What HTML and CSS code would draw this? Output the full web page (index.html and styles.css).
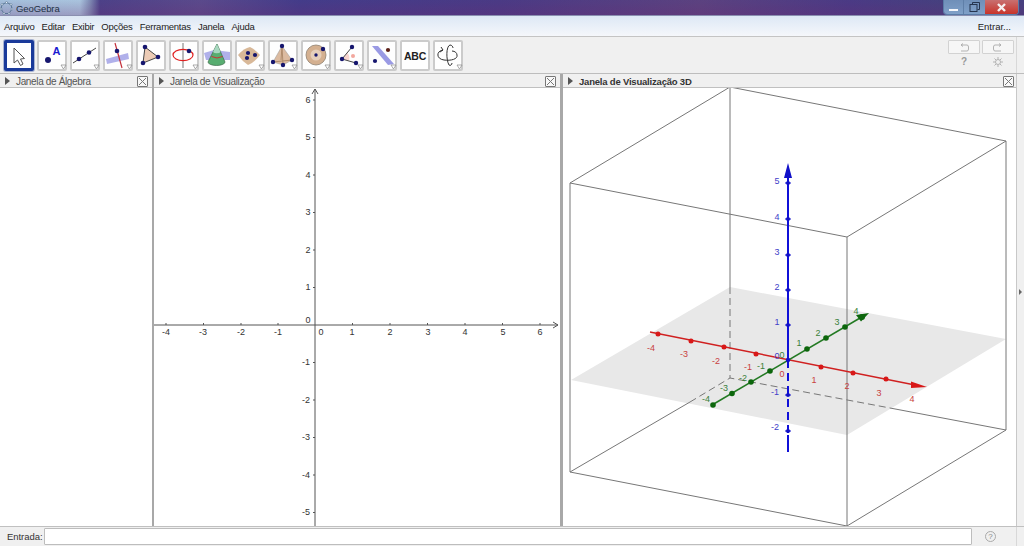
FILE: index.html
```html
<!DOCTYPE html>
<html lang="pt">
<head>
<meta charset="utf-8">
<title>GeoGebra</title>
<link rel="stylesheet" href="styles.css">
</head>
<body>
<div class="app">
  <header class="titlebar">
    <svg class="applogo" width="13" height="14" viewBox="0 0 13 14"><path class="logo" d="M6.500 1.500 L11 3.500 L12 8 L9 12.500 L4 12.500 L1 8 L2 3.500 Z"/><circle class="logodot" cx="6.500" cy="1.500" r="1"/><circle class="logodot" cx="11" cy="3.500" r="1"/><circle class="logodot" cx="12" cy="8" r="1"/><circle class="logodot" cx="9" cy="12.500" r="1"/><circle class="logodot" cx="4" cy="12.500" r="1"/><circle class="logodot" cx="1" cy="8" r="1"/><circle class="logodot" cx="2" cy="3.500" r="1"/></svg>
    <span class="apptitle">GeoGebra</span>
    <div class="winctl">
      <div class="wbtn wmin"><span class="minbar"></span></div>
      <div class="wbtn wmax"><svg width="11" height="10" viewBox="0 0 11 10"><path class="maxicon" d="M3.500 2.500 V0.500 H10.500 V7.500 H8.500"/><rect class="maxicon" x="1" y="2.500" width="7" height="7"/></svg></div>
      <div class="wbtn wclose"><svg width="11" height="9" viewBox="0 0 11 9"><path class="closeicon" d="M2 1 L9 8 M9 1 L2 8"/></svg></div>
    </div>
  </header>
  <nav class="menubar">
    <span>Arquivo</span><span>Editar</span><span>Exibir</span><span>Opções</span><span>Ferramentas</span><span>Janela</span><span>Ajuda</span>
    <span class="login">Entrar...</span>
  </nav>
  <div class="toolbar">
    <div class="tools">
      <div class="tool selected"><svg width="26" height="26" viewBox="0 0 26 26"><path class="cursor" d="M8 5 V20 L11.500 17 L14.500 22.500 L17 21 L14.500 16 L18.500 15.500 Z"/></svg></div>
      <div class="tool"><svg width="30" height="31" viewBox="0 0 30 31"><circle class="pt" cx="11" cy="20" r="3"/><text class="icontext" x="15.500" y="15">A</text><path class="corner" d="M24 25h5l-2.500 4z"/></svg></div>
      <div class="tool"><svg width="30" height="31" viewBox="0 0 30 31"><path class="ln" d="M3 23 L26 8"/><circle class="pts" cx="9" cy="19" r="2.300"/><circle class="pts" cx="19" cy="12.500" r="2.300"/><path class="corner" d="M24 25h5l-2.500 4z"/></svg></div>
      <div class="tool"><svg width="30" height="31" viewBox="0 0 30 31"><path class="plane" d="M3 19 L25 13 L26 19 L4 24 Z"/><path class="redln" d="M12 3 L19 28"/><circle class="pts" cx="14" cy="11" r="2.300"/><path class="corner" d="M24 25h5l-2.500 4z"/></svg></div>
      <div class="tool"><svg width="30" height="31" viewBox="0 0 30 31"><path class="tri" d="M9 7 L22 17 L7 23 Z"/><circle class="pts" cx="9" cy="7" r="2.300"/><circle class="pts" cx="22" cy="17" r="2.300"/><circle class="pts" cx="7" cy="23" r="2.300"/></svg></div>
      <div class="tool"><svg width="30" height="31" viewBox="0 0 30 31"><path class="greyln" d="M14 3 V28"/><ellipse class="redring" cx="14" cy="15" rx="10" ry="5.700"/><circle class="pts" cx="20" cy="11" r="2.300"/><path class="corner" d="M24 25h5l-2.500 4z"/></svg></div>
      <div class="tool"><svg width="30" height="31" viewBox="0 0 30 31"><path class="plane" d="M2 13 L12 10 L28 12 L28 20 L4 20 Z"/><path class="cone" d="M15 4 L23 22 A8.500 3.500 0 0 1 6 22 Z"/><path class="conetop" d="M15 4 L18.500 12 A4 2 0 0 1 11 12 Z"/><path class="redthin" d="M9.500 16.500 Q15 19.500 20.500 16.500"/></svg></div>
      <div class="tool"><svg width="30" height="31" viewBox="0 0 30 31"><path class="sand" d="M3 15 Q9 8 15 7 Q21 10 25 15 Q20 22 13 25 Q7 21 3 15 Z"/><circle class="pts" cx="13" cy="13" r="2.100"/><circle class="pts" cx="20" cy="15" r="2.100"/><circle class="pts" cx="12" cy="18" r="2.100"/><path class="corner" d="M24 25h5l-2.500 4z"/></svg></div>
      <div class="tool"><svg width="30" height="31" viewBox="0 0 30 31"><path class="sandfill" d="M14 6 L5 22 L15 25 L24 20 Z"/><path class="brownln" d="M14 6 L15 25 M14 6 L13 20 M5 22 L24 20"/><circle class="pts" cx="14" cy="6" r="2.200"/><circle class="pts" cx="5" cy="22" r="2.200"/><circle class="pts" cx="15" cy="25" r="2.200"/><circle class="pts" cx="24" cy="20" r="2.200"/><path class="corner" d="M24 25h5l-2.500 4z"/></svg></div>
      <div class="tool"><svg width="30" height="31" viewBox="0 0 30 31"><circle class="sphere" cx="15" cy="15" r="10"/><circle class="sphereinner" cx="15" cy="15" r="5.500"/><circle class="pts" cx="15" cy="15" r="1.700"/><circle class="pts" cx="22" cy="9" r="2.200"/><path class="corner" d="M24 25h5l-2.500 4z"/></svg></div>
      <div class="tool"><svg width="30" height="31" viewBox="0 0 30 31"><path class="pinkarc" d="M13.500 13 A8 8 0 0 1 15 20.500 L8 19 Z"/><path class="ln" d="M18 7 L8 19 L22 23"/><circle class="pinkdot" cx="19" cy="16" r="2"/><circle class="pts" cx="18" cy="7" r="2.200"/><circle class="pts" cx="8" cy="19" r="2.200"/><circle class="pts" cx="22" cy="23" r="2.200"/><path class="corner" d="M24 25h5l-2.500 4z"/></svg></div>
      <div class="tool"><svg width="30" height="31" viewBox="0 0 30 31"><path class="bluestripe" d="M5 6 L11 6 L27 24 L21 25 Z"/><circle class="brownpt" cx="21" cy="10" r="2.100"/><circle class="pts" cx="8" cy="21" r="2.100"/><path class="corner" d="M24 25h5l-2.500 4z"/></svg></div>
      <div class="tool"><svg width="30" height="31" viewBox="0 0 30 31"><text class="abc" x="15" y="20">ABC</text></svg></div>
      <div class="tool"><svg width="30" height="31" viewBox="0 0 30 31"><path class="rotate" d="M10 10 C3 11 3 19 11 20 C18 21 25 19 24 15 C24 13 22 11 19 11 M17 5 C13 6 13 20 16 25 C17 26 19 25 19 23 M17 5 C19 5 20 7 20 8 M10 10 L8 7 M10 10 L7 12"/><path class="corner" d="M24 25h5l-2.500 4z"/></svg></div>
    </div>
    <div class="undo-area">
      <div class="undorow">
        <div class="ubtn"><svg width="12" height="9" viewBox="0 0 12 9"><path class="uicon" d="M3 2 H9 Q10.500 2 10.500 4 V6 Q10.500 8 9 8 H3 M3 2 L5 0.500 M3 2 L5 3.500"/></svg></div>
        <div class="ubtn"><svg width="12" height="9" viewBox="0 0 12 9"><path class="uicon" d="M9 2 H3 Q1.500 2 1.500 4 V6 Q1.500 8 3 8 H9 M9 2 L7 0.500 M9 2 L7 3.500"/></svg></div>
      </div>
      <div class="helprow">
        <span class="helpcell"><span class="help">?</span></span>
        <span class="helpcell"><svg width="10" height="10" viewBox="0 0 10 10"><circle class="uicon" cx="5" cy="5" r="2.500"/><path class="uicon" d="M5 0 V2 M5 8 V10 M0 5 H2 M8 5 H10 M1.500 1.500 L3 3 M7 7 L8.500 8.500 M1.500 8.500 L3 7 M7 3 L8.500 1.500"/></svg></span>
      </div>
    </div>
  </div>
  <main class="views">
    <section class="panel algebra">
      <div class="phead"><span class="tri-r"></span><span class="ptitle">Janela de Álgebra</span><span class="closex"><svg width="9" height="9" viewBox="0 0 9 9"><path class="xmark" d="M1 1 L8 8 M8 1 L1 8"/></svg></span></div>
      <div class="pbody"></div>
    </section>
    <section class="panel graphics">
      <div class="phead"><span class="tri-r"></span><span class="ptitle">Janela de Visualização</span><span class="closex"><svg width="9" height="9" viewBox="0 0 9 9"><path class="xmark" d="M1 1 L8 8 M8 1 L1 8"/></svg></span></div>
      <div class="pbody">
        <svg class="canvas" width="406" height="438" viewBox="154 88 406 438">
          <g class="axis2d">
            <path d="M154 325 H558 M553 322 L558 325 L553 328"/>
            <path d="M315 526 V89 M312 94 L315 89 L318 94"/>
            <path d="M166 323v2M203.500 323v2M241 323v2M278 323v2M352.500 323v2M390 323v2M427.500 323v2M465 323v2M502.500 323v2M540 323v2"/>
            <path d="M315 100h-2M315 137.500h-2M315 175h-2M315 212.500h-2M315 250h-2M315 287.500h-2M315 362.500h-2M315 400h-2M315 437.500h-2M315 475h-2M315 512.500h-2"/>
          </g>
          <g class="lbl2d">
            <text x="166" y="335">-4</text><text x="203" y="335">-3</text><text x="241" y="335">-2</text><text x="278" y="335">-1</text><text x="321" y="335">0</text><text x="352" y="335">1</text><text x="390" y="335">2</text><text x="428" y="335">3</text><text x="465" y="335">4</text><text x="503" y="335">5</text><text x="540" y="335">6</text>
            <text x="308" y="323">0</text>
            <text x="308" y="103">6</text><text x="308" y="140">5</text><text x="308" y="178">4</text><text x="308" y="215">3</text><text x="308" y="253">2</text><text x="308" y="290">1</text>
            <text x="306" y="365">-1</text><text x="306" y="403">-2</text><text x="306" y="440">-3</text><text x="306" y="478">-4</text><text x="306" y="515">-5</text>
          </g>
        </svg>
      </div>
    </section>
    <section class="panel view3d">
      <div class="phead"><span class="tri-r"></span><span class="ptitle active">Janela de Visualização 3D</span><span class="closex"><svg width="9" height="9" viewBox="0 0 9 9"><path class="xmark" d="M1 1 L8 8 M8 1 L1 8"/></svg></span></div>
      <div class="pbody">
        <svg class="canvas" width="453" height="438" viewBox="563 88 453 438">
          <path class="floor" d="M730 287 L1006 339 L847 435 L571 380 Z"/>
          <g class="box">
            <path d="M570 183 L730 87 L1006 141 L847 237 Z"/>
            <path d="M570 183 V472 M847 237 V526 M1006 141 V430 M730 87 V287"/>
            <path d="M570 472 L847 526 L1006 430"/>
            <path d="M570 472 L690 402 M890 408 L1006 430"/>
          </g>
          <g class="box dashed">
            <path d="M730 287 V378 M690 402 L730 378 L890 408"/>
          </g>
          <g class="xaxis">
            <path class="axisln" d="M650 332 L915 385"/>
            <path class="axishead" d="M927 387 L911 381.500 L911 388 Z"/>
            <circle cx="658" cy="334" r="2.500"/><circle cx="691" cy="341" r="2.500"/><circle cx="724" cy="347" r="2.500"/><circle cx="756" cy="354" r="2.500"/><circle cx="821" cy="367" r="2.500"/><circle cx="853" cy="373" r="2.500"/><circle cx="886" cy="379" r="2.500"/>
          </g>
          <g class="yaxis">
            <path class="axisln" d="M712 405 L860 318"/>
            <path class="axishead" d="M869 313 L856 315 L861 321.500 Z"/>
            <circle cx="713" cy="405" r="2.800"/><circle cx="732" cy="393.500" r="2.800"/><circle cx="751" cy="382" r="2.800"/><circle cx="770" cy="371" r="2.800"/><circle cx="807" cy="349" r="2.800"/><circle cx="826" cy="338" r="2.800"/><circle cx="845" cy="327" r="2.800"/><circle cx="862" cy="317" r="3"/>
          </g>
          <g class="zaxis">
            <path class="axisln" d="M788 172 V360 M788 435 V452"/>
            <path class="axisln dashz" d="M788 360 V435"/>
            <path class="axishead" d="M788 163 L784 178 L792 178 Z"/>
            <path class="zticks" d="M785 183h6M785 219h6M785 255h6M785 290h6M785 325h6M785 395h6M785 431h6"/>
            <circle cx="788" cy="183" r="2"/><circle cx="788" cy="219" r="2"/><circle cx="788" cy="255" r="2"/><circle cx="788" cy="290" r="2"/><circle cx="788" cy="325" r="2"/><circle cx="788" cy="395" r="2"/><circle cx="788" cy="431" r="2"/>
            <circle cx="788" cy="360" r="2.200"/>
          </g>
          <g class="lblx">
            <text x="651" y="351">-4</text><text x="684" y="357">-3</text><text x="716" y="364">-2</text><text x="748" y="370">-1</text><text x="782" y="377">0</text><text x="814" y="383">1</text><text x="847" y="389">2</text><text x="879" y="396">3</text><text x="912" y="402">4</text>
          </g>
          <g class="lbly">
            <text x="706" y="402">-4</text><text x="724" y="391">-3</text><text x="743" y="381">-2</text><text x="761" y="369">-1</text><text x="782" y="358">0</text><text x="799" y="346">1</text><text x="818" y="336">2</text><text x="837" y="325">3</text><text x="856" y="314">4</text>
          </g>
          <g class="lblz">
            <text x="777" y="184">5</text><text x="777" y="220">4</text><text x="777" y="255">3</text><text x="777" y="290">2</text><text x="777" y="325">1</text><text x="777" y="359">0</text><text x="775" y="395">-1</text><text x="775" y="430">-2</text>
          </g>
        </svg>
      </div>
    </section>
    <aside class="sidebar"><span class="side-arrow"></span></aside>
  </main>
  <footer class="inputbar">
    <label class="entrylabel">Entrada:</label>
    <div class="entryfield"></div>
    <span class="entryhelp">?</span>
  </footer>
</div>
</body>
</html>
```
FILE: styles.css
```css
* { box-sizing: border-box; }
html, body { margin: 0; padding: 0; }
body { width: 1024px; height: 546px; overflow: hidden; background: #f0f0f0; font-family: "Liberation Sans", Arial, sans-serif; font-size: 10px; color: #333; }
.app { display: flex; flex-direction: column; width: 1024px; height: 546px; }

.titlebar { flex: 0 0 16px; display: flex; align-items: flex-start; padding-left: 0; background: linear-gradient(180deg, rgba(90, 80, 150, 0) 0, rgba(110, 40, 110, 0.25) 100%), linear-gradient(90deg, #a4c1dc 0, #a9c4de 80px, #7f8bb4 90px, #4c4188 100px, #5a4a8c 200px, #433c8a 300px, #4a3a85 500px, #5b4280 700px, #4a3a85 850px, #45407f 940px, #45407f 1024px); border-bottom: 1px solid #8a8fb0; }
.applogo { flex: none; margin: 1px 0 0 0; }
.logo { fill: none; stroke: #4a6a88; stroke-width: 0.800; }
.logodot { fill: #e8f0f8; stroke: #4a6a88; stroke-width: 0.500; }
.apptitle { margin: 3px 0 0 3px; font-size: 9.500px; line-height: 11px; color: #1e3044; letter-spacing: -0.100px; }
.winctl { margin-left: auto; margin-right: 5px; display: flex; height: 15px; border: 1px solid #5a7ba6; border-top: 0; border-radius: 0 0 4px 4px; overflow: hidden; }
.wbtn { display: flex; align-items: center; justify-content: center; }
.wmin { width: 20px; background: linear-gradient(#6f8fb8, #7fa0c8); border-right: 1px solid #5f7fa8; }
.wmax { width: 21px; background: linear-gradient(#6f8fb8, #7fa0c8); }
.wclose { width: 33px; background: linear-gradient(#c87070, #c8342a); }
.minbar { width: 9px; height: 2px; margin-top: 5px; background: #f4f6fa; }
.maxicon { fill: none; stroke: #25354f; stroke-width: 1; }
.closeicon { fill: none; stroke: #f6f0f0; stroke-width: 2.400; }

.menubar { flex: 0 0 21px; display: flex; align-items: center; gap: 7.100px; padding: 1px 4px 0; background: linear-gradient(#dde8f5, #f5f7fb); border-bottom: 1px solid #c4c4c4; font-size: 9.500px; letter-spacing: -0.250px; color: #222; }
.login { margin-left: auto; margin-right: 9px; letter-spacing: 0; }

.toolbar { flex: 0 0 37px; display: flex; justify-content: space-between; padding: 3px 0 0 4px; background: linear-gradient(90deg, #f0f0f0 1016px, #d8d8d8 1016px, #d8d8d8 1017px, #f0f0f0 1017px); border-bottom: 1px solid #bdbdbd; }
.tools { display: flex; gap: 3px; align-items: flex-start; }
.tool { width: 30px; height: 31px; background: #fefefe; border: 2px solid #cbcbcb; border-radius: 2px; display: flex; align-items: center; justify-content: center; flex: none; }
.tool svg { flex: none; margin: -2px; }
.tool.selected { background: #fff; border: 3px solid #1a3a9a; box-shadow: 0 0 0 1px #a9b4d2; }
.cursor { fill: #fff; stroke: #555; stroke-width: 1; }
.pt, .pts { fill: #16166e; }
.icontext { font: bold 11px "Liberation Sans", sans-serif; fill: #1a1ad0; }
.corner { fill: #fff; stroke: #888; stroke-width: 0.700; }
.ln { stroke: #444; stroke-width: 1; fill: none; }
.plane { fill: #b0b0ea; }
.redln { stroke: #c4303a; stroke-width: 1.200; fill: none; }
.tri { fill: #eccbb5; stroke: #444; stroke-width: 1; }
.redring { fill: none; stroke: #e02020; stroke-width: 1.200; }
.greyln { stroke: #777; stroke-width: 1; }
.cone { fill: #58ad70; stroke: #3a6a48; stroke-width: 0.700; }
.conetop { fill: #a8d8c0; }
.redthin { stroke: #d03030; fill: none; }
.sand { fill: #d8b898; }
.sandfill { fill: #dcbba0; stroke: #999; stroke-width: 0.500; }
.brownln { stroke: #a58060; stroke-width: 0.800; fill: none; }
.sphere { fill: #d4b090; stroke: #8f8070; stroke-width: 0.800; }
.sphereinner { fill: #e6cfba; }
.pinkarc { fill: #f8d5cf; }
.pinkdot { fill: #f2a79e; }
.bluestripe { fill: #9a9ae4; }
.brownpt { fill: #5a2018; }
.abc { font: bold 10.500px "Liberation Sans", sans-serif; fill: #222; text-anchor: middle; letter-spacing: -0.200px; }
.rotate { fill: none; stroke: #333; stroke-width: 1; }

.undo-area { width: 76px; padding: 0 10px 0 0; display: flex; flex-direction: column; align-items: stretch; }
.undorow { display: flex; gap: 2px; justify-content: flex-end; }
.ubtn { width: 32px; height: 14px; border: 1px solid #d2d2d2; border-radius: 1px; background: #f6f6f6; display: flex; align-items: center; justify-content: center; }
.uicon { fill: none; stroke: #aaa; stroke-width: 0.900; }
.helprow { display: flex; justify-content: flex-end; gap: 2px; padding-top: 2px; }
.helpcell { width: 32px; height: 11px; display: flex; align-items: center; justify-content: center; }
.help { color: #999; font-size: 10px; font-weight: bold; }

.views { flex: 1 1 auto; display: flex; min-height: 0; background: #fff; }
.panel { display: flex; flex-direction: column; min-width: 0; }
.algebra { flex: 0 0 154px; border-right: 2px solid #a8a8a8; }
.algebra .phead { padding-right: 4px; }
.graphics { flex: 0 0 409px; border-right: 3px solid #a8a8a8; }
.view3d { flex: 1 1 auto; }
.view3d .phead { padding-right: 2px; }
.phead { flex: 0 0 14px; display: flex; align-items: center; padding: 1px 4px 0 5px; background: #f0f0f0; border-bottom: 1px solid #c0c0c0; }
.tri-r { width: 0; height: 0; border-left: 5px solid #555; border-top: 4px solid transparent; border-bottom: 4px solid transparent; margin-right: 6px; }
.ptitle { color: #555; font-size: 10px; letter-spacing: -0.350px; }
.ptitle.active { color: #333; font-weight: bold; font-size: 9.500px; letter-spacing: -0.200px; }
.closex { margin-left: auto; width: 11px; height: 11px; border: 1px solid #777; border-radius: 1px; display: flex; background: #f8f8f8; }
.xmark { stroke: #777; stroke-width: 1; fill: none; }
.pbody { flex: 1 1 auto; background: #fff; min-height: 0; }
.canvas { display: block; }

.axis2d path { fill: none; stroke: #555; stroke-width: 1; }
.lbl2d text { font-size: 9px; fill: #333; text-anchor: middle; }

.floor { fill: #e8e8e8; }
.box path { fill: none; stroke: #777; stroke-width: 1; }
.dashed path { stroke-dasharray: 7 4; }
.axisln { fill: none; stroke-width: 1.500; }
.xaxis .axisln { stroke: #d02020; }
.xaxis .axishead, .xaxis circle { fill: #d81818; }
.yaxis .axisln { stroke: #237a23; }
.yaxis .axishead, .yaxis circle { fill: #0c660c; }
.zaxis .axisln { stroke: #1010d8; stroke-width: 2; }
.zaxis .dashz { stroke-dasharray: 8 5; }
.zaxis .axishead, .zaxis circle { fill: #1010c8; }
.zticks { fill: none; stroke: #1010c8; stroke-width: 1; }
.lblx text, .lbly text, .lblz text { font-size: 9px; text-anchor: middle; }
.lblx text { fill: #c84040; }
.lbly text { fill: #3a803a; }
.lblz text { fill: #4040c8; }

.sidebar { flex: 0 0 8px; background: #f0f0f0; border-left: 1px solid #c8c8c8; display: flex; align-items: center; justify-content: center; padding-bottom: 16px; }
.side-arrow { width: 0; height: 0; border-left: 3px solid #666; border-top: 3px solid transparent; border-bottom: 3px solid transparent; }

.inputbar { flex: 0 0 20px; display: flex; align-items: center; padding: 0 0 0 7px; background: linear-gradient(90deg, #f0f0f0 1016px, #d8d8d8 1016px, #d8d8d8 1017px, #f0f0f0 1017px); border-top: 1px solid #c0c0c0; }
.entrylabel { font-size: 9.500px; letter-spacing: -0.050px; color: #333; width: 37px; }
.entryfield { width: 928px; height: 17px; background: #fff; border: 1px solid #bdbdbd; border-radius: 1px; }
.entryhelp { margin-left: 13px; width: 11px; height: 11px; border: 1px solid #aaa; border-radius: 50%; font-size: 8px; color: #888; display: flex; align-items: center; justify-content: center; }
```
